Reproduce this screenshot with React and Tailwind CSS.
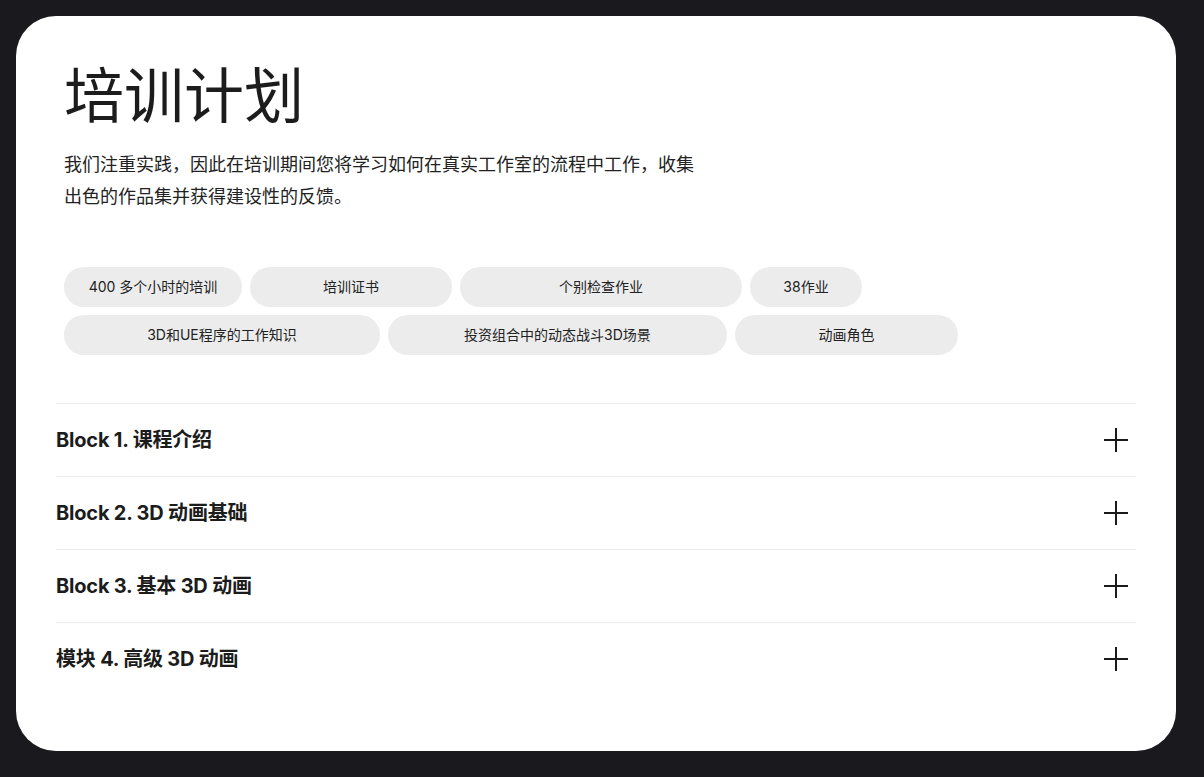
import React from 'react';

const tags = [
  [
    { label: '400 多个小时的培训', w: 'w-[178px]' },
    { label: '培训证书', w: 'w-[202px]' },
    { label: '个别检查作业', w: 'w-[282px]' },
    { label: '38作业', w: 'w-[112px]' },
  ],
  [
    { label: '3D和UE程序的工作知识', w: 'w-[316px]' },
    { label: '投资组合中的动态战斗3D场景', w: 'w-[339px]' },
    { label: '动画角色', w: 'w-[223px]' },
  ],
];

const blocks = ['Block 1. 课程介绍', 'Block 2. 3D 动画基础', 'Block 3. 基本 3D 动画', '模块 4. 高级 3D 动画'];

const PlusIcon = () => (
  <svg width="24" height="24" viewBox="0 0 24 24" fill="none" stroke="#1a1a1a" strokeWidth="2">
    <path d="M12 0v24M0 12h24" />
  </svg>
);

export default function App() {
  return (
    <div
      className="min-h-[777px] w-full bg-[#1a191e] p-4"
      style={{ fontFamily: 'Inter, "Noto Sans CJK SC", sans-serif' }}
    >
      <div className="w-[1160px] rounded-[40px] bg-white px-10 pt-[44px] pb-[56px] text-[#1c1c1c]">
        {/* header */}
        <div className="pl-2">
          <h1 className="text-[60px] leading-[72px] font-normal">培训计划</h1>
          <p className="mt-[17px] w-[640px] text-[18px] leading-[32px] text-[#222]">
            我们注重实践，因此在培训期间您将学习如何在真实工作室的流程中工作，收集出色的作品集并获得建设性的反馈。
          </p>

          <div className="mt-[54px] flex flex-col gap-2">
            {tags.map((row, i) => (
              <div key={i} className="flex gap-2">
                {row.map((t) => (
                  <div
                    key={t.label}
                    className={`${t.w} flex h-10 items-center justify-center rounded-full bg-[#ececec] pb-[2px] text-[14px] text-[#222]`}
                  >
                    {t.label}
                  </div>
                ))}
              </div>
            ))}
          </div>
        </div>

        {/* accordion */}
        <div className="mt-[48px]">
          {blocks.map((b) => (
            <div key={b} className="flex h-[73px] items-center justify-between border-t border-[#ececec] pr-2">
              <span className="text-[20px] font-bold tracking-[-0.2px]">{b}</span>
              <PlusIcon />
            </div>
          ))}
        </div>
      </div>
    </div>
  );
}
